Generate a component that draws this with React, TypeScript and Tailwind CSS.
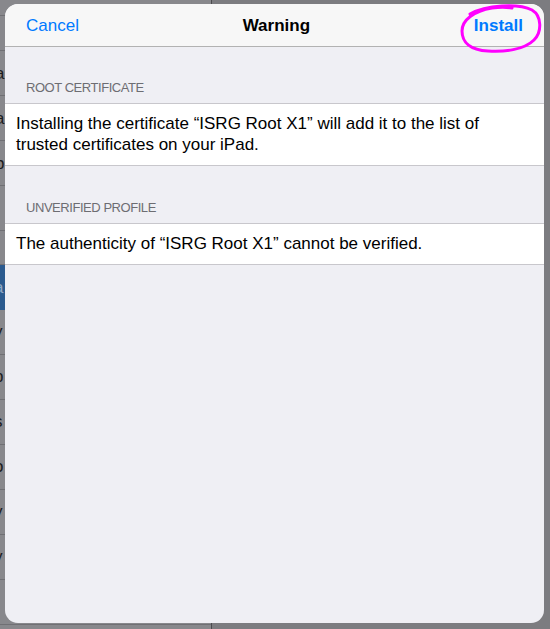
const rows = [
  { h: "h-[30px]", label: "o’", value: "Off" },
  { h: "h-[35px]", label: "", value: "" },
  { h: "h-[45px]", label: "a", value: "" },
  { h: "h-[45px]", label: "a", value: "" },
  { h: "h-[45px]", label: "b", value: "" },
  { h: "h-[45px]", label: "t", value: "" },
  { h: "h-[34px]", label: "", value: "" },
];

const lowerRows = ["y", "p", "s", "o", "y", "y", ""];

function BackgroundList() {
  return (
    <div className="flex h-full">
      <div className="flex w-[212px] flex-col bg-[#88888c] border-r border-[#4b4b4e]">
        {rows.map((r, i) => (
          <div
            key={i}
            className={`${r.h} flex items-end justify-between border-b border-[#707074] pb-[9px] text-[17px] text-[#1c1c1e] -ml-[5px] pl-0 pr-[12px]`}
          >
            <span>{r.label}</span>
            <span className="text-[#b0b0b4]">{r.value}</span>
          </div>
        ))}
        <div className="flex h-[45px] items-center bg-[#2b5a8e] -ml-[6px] text-[17px] text-[#8fa8c4]">
          a
        </div>
        {lowerRows.map((l, i) => (
          <div
            key={i}
            className="flex h-[45px] shrink-0 items-center border-b border-[#707074] -ml-[6px] text-[17px] text-[#1c1c1e]"
          >
            {l}
          </div>
        ))}
      </div>
      <div className="flex-1 bg-[#7c7c80]" />
    </div>
  );
}

function SectionHeader({ children, top }: { children: string; top: string }) {
  return (
    <div
      className={`${top} pb-[7px] pl-[21px] text-[13px] leading-[16px] tracking-[-0.45px] text-[#6d6d72] uppercase`}
    >
      {children}
    </div>
  );
}

function Cell({ children }: { children: React.ReactNode }) {
  return (
    <div className="border-y border-[#c8c7cc] bg-white pl-[11px] pr-[11px] pt-[9px] pb-[10px] text-[17px] leading-[21px] text-black">
      {children}
    </div>
  );
}

export default function App() {
  return (
    <div
      className="relative h-[629px] w-[550px] overflow-hidden bg-[#7c7c80]"
      style={{ fontFamily: '"Liberation Sans", Arial, sans-serif' }}
    >
      <div className="absolute inset-0 -top-[14px]">
        <BackgroundList />
      </div>

      <div className="absolute left-[5px] top-[4px] flex h-[619px] w-[539px] flex-col overflow-hidden rounded-[13px] bg-[#efeff4]">
        <div className="flex h-[43px] shrink-0 items-center justify-between border-b border-[#b2b2b2] bg-[#f7f7f7] px-[21px] pt-[2px] text-[17px]">
          <span className="text-[#007aff]">Cancel</span>
          <span className="font-bold text-black">Warning</span>
          <span className="font-bold text-[#007aff]">Install</span>
        </div>

        <SectionHeader top="pt-[33px]">Root Certificate</SectionHeader>
        <Cell>
          Installing the certificate “ISRG Root X1” will add it to the list of
          <br />
          trusted certificates on your iPad.
        </Cell>

        <SectionHeader top="pt-[34px]">Unverified Profile</SectionHeader>
        <Cell>The authenticity of “ISRG Root X1” cannot be verified.</Cell>
      </div>

      <svg
        className="pointer-events-none absolute left-0 top-0"
        width="550"
        height="629"
        viewBox="0 0 550 629"
        fill="none"
      >
        <path
          d="M470 14 C486 5 518 3 532 10 C542 16 542 32 534 40 C524 50 504 52 488 51 C470 50 462 42 462 31 C462 20 474 11 492 8 C500 7 506 7 512 8"
          stroke="#ff00ff"
          strokeWidth="3"
          strokeLinecap="round"
        />
      </svg>
    </div>
  );
}
